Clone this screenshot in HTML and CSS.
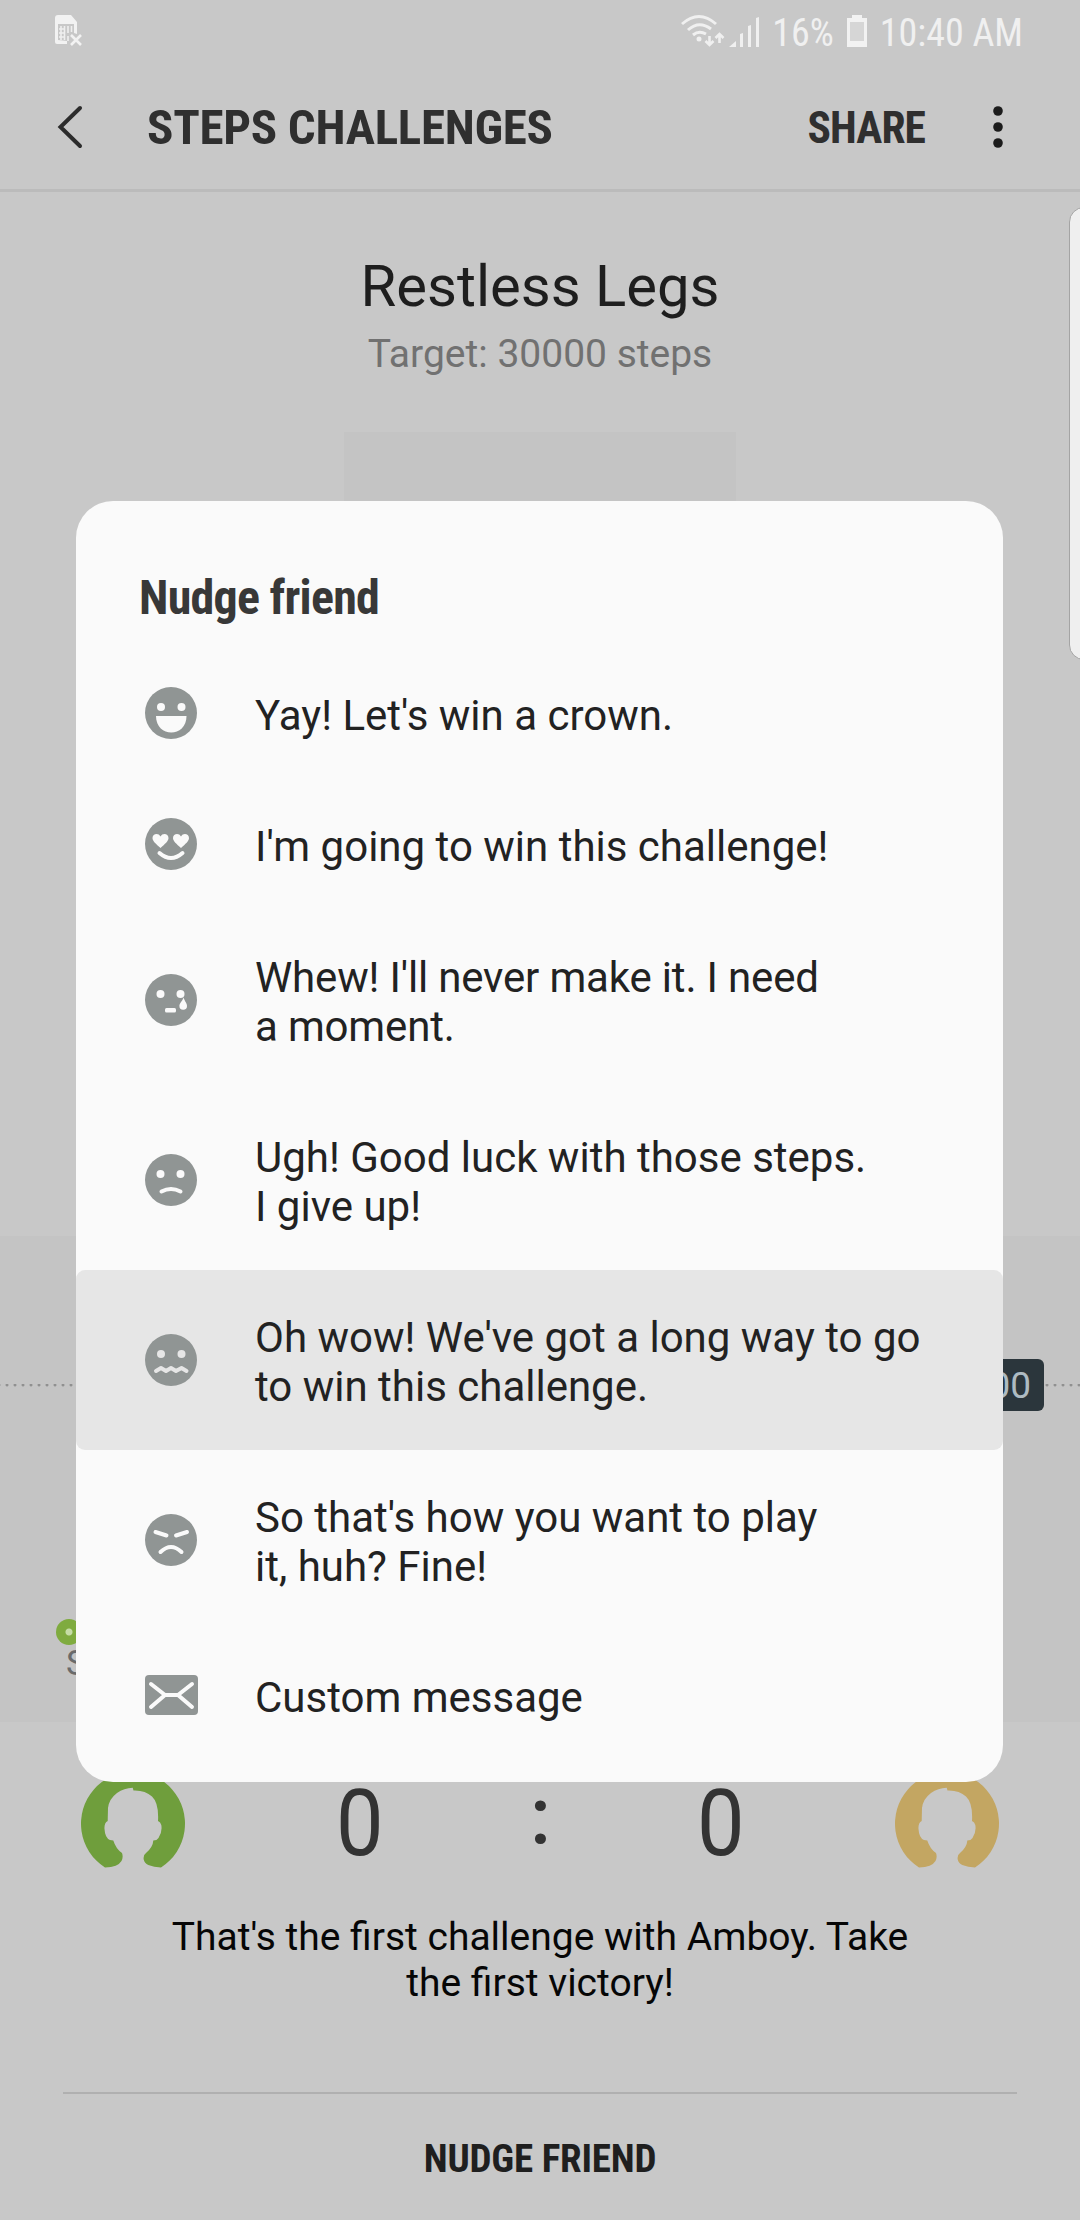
FILE: index.html
```html
<!DOCTYPE html>
<html lang="en">
<head>
<meta charset="utf-8">
<title>Steps challenges</title>
<link rel="stylesheet" href="styles.css">
</head>
<body>
<div class="screen">
  <header class="status">
    <svg class="sim" width="28" height="32" viewBox="0 0 28 32"><path fill="#f2f2f2" fill-rule="evenodd" d="M3 0H16L22 7V19L19 18V9H3V25L12 26V29H2Q0 29 0 27V3Q0 0 3 0Z"/><path fill="none" stroke="#efefef" stroke-width="1.6" d="M6 11v14M9.500 11v14M13 11v7M13 21v5M16.500 11v6M4 14h5M4 18h5M4 22h5"/><path stroke="#f2f2f2" stroke-width="2.600" d="M16 20L26 30M26 20L16 30"/></svg>
    <div class="status-right">
      <svg width="80" height="34" viewBox="0 0 80 34" fill="none" stroke="#f0f0f0"><path stroke-width="3" d="M1 10Q18-5 35 10M7 16Q18 6 30 15M12 21Q18 16 25 20"/><circle cx="18" cy="25" r="2.500" fill="#f0f0f0" stroke="none"/><path stroke-width="2.600" d="M28.500 22v9M24.500 27l4 4 4-4M38.500 29v-9M34.500 24l4-4 4 4"/><path fill="#f0f0f0" stroke="none" d="M48 33l7-6v6zM59 20l3-1v14h-3zM67 12l3-1v22h-3zM75 4l3-1v30h-3z"/></svg>
      <span class="cond status-text pct">16%</span>
      <svg width="22" height="34" viewBox="0 0 22 34"><path fill="#f2f2f2" d="M6 1h10v4H6zM1 4h20v29H1z"/><path fill="#d6d6d6" d="M4 8h14v19H4z"/></svg>
      <span class="cond status-text clock">10:40 AM</span>
    </div>
  </header>
  <nav class="bar">
    <svg class="back" width="28" height="46" viewBox="0 0 28 46"><path d="M23 4L3.500 23L23 42" fill="none" stroke="#2c2c2c" stroke-width="4" stroke-linecap="round"/></svg>
    <h1 class="cond bar-title">STEPS CHALLENGES</h1>
    <span class="cond share">SHARE</span>
    <svg class="more" width="12" height="44" viewBox="0 0 12 44" fill="#1c1c1c"><circle cx="6" cy="6" r="4.800"/><circle cx="6" cy="22" r="4.800"/><circle cx="6" cy="38" r="4.800"/></svg>
  </nav>
  <section class="head">
    <h2>Restless Legs</h2>
    <p>Target: 30000 steps</p>
    <div class="medal"></div>
  </section>
  <section class="chart">
    <div class="goal"><span class="goal-tag">00</span></div>
    <div class="start"><i class="dot"></i><span>S</span></div>
  </section>
  <section class="score">
    <svg width="106" height="106" viewBox="0 0 106 106"><use href="#ring" fill="#6f9e3c"/></svg>
    <span class="num">0</span>
    <span class="cond colon">:</span>
    <span class="num">0</span>
    <svg width="106" height="106" viewBox="0 0 106 106"><defs><path id="ring" d="M25 96.500A52 52 0 1 1 81 96.500Q74 96 68.300 94Q64.500 92 63.700 88.500Q63 84 66 82Q73 76 73.300 69.500Q77 69.500 78.500 67Q82.500 61 81.300 54Q80.500 51 78 50Q79 32 72 25.500Q65 19 53.500 19.500L52.700 16.700Q44 17 37 22Q29 28 28 37L27.700 50Q24 52 24.500 58Q25 67 30 69L33.300 69.500Q36 78 42 82Q43.500 86 41.500 90Q38 96 25 96.500Z"/></defs><use href="#ring" fill="#c3a662"/></svg>
  </section>
  <p class="note">That's the first challenge with Amboy. Take<br>the first victory!</p>
  <footer class="nudge"><span class="cond">NUDGE FRIEND</span></footer>

  <div class="edge"></div>

  <div class="dialog">
    <h3 class="cond">Nudge friend</h3>
    <ul>
      <li><svg class="ico" viewBox="0 0 52 52"><circle class="face" cx="26" cy="26" r="26"/><circle cx="16" cy="20" r="4"/><circle cx="36.500" cy="20" r="4"/><path d="M11 29H41.500C41.500 51 11 51 11 29Z"/></svg><span>Yay! Let's win a crown.</span></li>
      <li><svg class="ico" viewBox="0 0 52 52"><circle class="face" cx="26" cy="26" r="26"/><path id="heart" d="M15.500 30C11 26 7.500 23 7.500 20C7.500 15.500 13.500 14.500 15.500 18.500C17.500 14.500 23.500 15.500 23.500 20C23.500 23 20 26 15.500 30Z"/><use href="#heart" x="20.500"/><path class="line" d="M14.500 35Q26 45 37.500 35"/></svg><span>I'm going to win this challenge!</span></li>
      <li><svg class="ico" viewBox="0 0 52 52"><circle class="face" cx="26" cy="26" r="26"/><circle cx="15.500" cy="20" r="4"/><circle cx="35.500" cy="20" r="4"/><path d="M38.500 23.500C40 28 42 29 42 32A3.800 3.800 0 0 1 34.400 32C34.400 29 37.500 27 38.500 23.500Z"/><rect x="20" y="34" width="11" height="4.500" rx="1.500"/></svg><span class="tight">Whew! I'll never make it. I need<br>a moment.</span></li>
      <li><svg class="ico" viewBox="0 0 52 52"><circle class="face" cx="26" cy="26" r="26"/><circle cx="15.500" cy="20" r="4"/><circle cx="35.500" cy="20" r="4"/><path class="line" d="M16.500 37.500Q26 32.500 35.500 37.500"/></svg><span>Ugh! Good luck with those steps.<br>I give up!</span></li>
      <li class="active"><svg class="ico" viewBox="0 0 52 52"><circle class="face" cx="26" cy="26" r="26"/><circle cx="16" cy="20" r="4"/><circle cx="36.500" cy="20" r="4"/><path class="line" d="M11 37L16 34L21 37L26 34L31 37L36.500 34L41.500 37"/></svg><span>Oh wow! We've got a long way to go<br>to win this challenge.</span></li>
      <li><svg class="ico" viewBox="0 0 52 52"><circle class="face" cx="26" cy="26" r="26"/><path class="line" d="M10.500 18L21.500 21.500M42 18L31 21.500M15.500 38Q26 28 36.500 38"/></svg><span>So that's how you want to play<br>it, huh? Fine!</span></li>
      <li><svg class="ico" viewBox="0 0 52 52"><rect class="face" x="0" y="6" width="53" height="40" rx="4"/><path class="line" d="M6 15L20 26L6 38M47 15L33 26L47 38M20 26H33"/></svg><span>Custom message</span></li>
    </ul>
  </div>
</div>
</body>
</html>
```
FILE: styles.css
```css
* { box-sizing: border-box; margin: 0; padding: 0; }
body { width: 1080px; height: 2220px; overflow: hidden; font-family: Roboto, "Liberation Sans", sans-serif; }
svg { display: block; overflow: visible; flex: none; }
.screen { position: relative; width: 1080px; height: 2220px; background: #c8c8c8; overflow: hidden; display: flex; flex-direction: column; }
.cond { font-family: "Roboto Condensed", Roboto, sans-serif; font-stretch: 75%; white-space: nowrap; }

.status { height: 64px; display: flex; align-items: flex-start; justify-content: space-between; padding: 15px 57px 0 55px; }
.status-right { display: flex; align-items: flex-start; margin-top: -1px; }
.status-text { font-size: 38px; line-height: 38px; color: #f0f0f0; }
.pct { margin: 0 12px 0 11px; }
.clock { margin-left: 12px; }

.bar { height: 128px; display: flex; align-items: center; padding-left: 57px; border-bottom: 3px solid #bbb; }
.bar-title { margin-left: 62px; margin-top: 2px; font-size: 49px; font-weight: 700; letter-spacing: -0.3px; color: #2f2f2f; }
.share { margin-left: auto; margin-top: 3px; font-size: 43.5px; font-weight: 700; letter-spacing: -0.9px; color: #2f2f2f; }
.more { margin: 0 76px 0 67px; }

.head { height: 1044px; text-align: center; display: flex; flex-direction: column; align-items: center; padding-top: 57px; }
.head h2 { font-size: 58px; font-weight: 400; line-height: 74px; color: #1e1e1e; }
.head p { margin-top: 2px; font-size: 39px; line-height: 58px; color: #717171; }
.medal { margin-top: 49px; width: 392px; height: 392px; background: #c4c4c4; }

.chart { height: 486px; background: #c4c4c4; padding-top: 123px; }
.goal { height: 52px; display: flex; justify-content: flex-end; padding-right: 36px; background: radial-gradient(circle at 4px 1px, #909090 1.2px, transparent 1.8px) 3px 25px / 8px 3px repeat-x; }
.goal-tag { width: 131px; border-radius: 6px; background: #2b363c; color: #aebbc2; font-size: 37px; line-height: 53px; text-align: right; padding-right: 13px; }
.start { margin: 208px 0 0 56px; font-size: 35px; line-height: 38px; color: #6a6a6a; display: flex; flex-direction: column; }
.start span { margin-left: 10px; }
.dot { width: 26px; height: 26px; border-radius: 50%; background: radial-gradient(circle, #c6dda6 3px, #7fab3f 4px); }

.score { height: 168px; display: grid; grid-template-columns: 106px 347px 14px 347px 106px; align-items: center; justify-items: center; padding: 35px 80px 0; }
.num { font-size: 92px; line-height: 108px; color: #333; transform: scaleX(0.92); }
.colon { font-size: 80px; line-height: 94px; font-weight: 500; color: #333; margin-top: -14px; }
.note { height: 202px; padding-top: 24px; text-align: center; font-size: 39px; line-height: 46px; color: #060606; }
.nudge { margin: 0 63px; border-top: 2px solid #b0b0b0; flex: 1; text-align: center; font-size: 39px; font-weight: 700; letter-spacing: -0.2px; color: #1f1f1f; padding-top: 42px; }

.edge { position: absolute; left: 1069px; top: 207px; width: 30px; height: 453px; border: 1px solid #a4a4a4; border-radius: 15px; background: #efefef; }

.dialog { position: absolute; left: 76px; top: 501px; width: 927px; height: 1281px; border-radius: 37px; background: #fafafa; overflow: hidden; }
.dialog h3 { height: 147px; padding: 69px 0 0 63px; font-size: 48px; line-height: 56px; letter-spacing: -0.75px; color: #383838; }
.dialog ul { list-style: none; }
.dialog li { display: flex; align-items: center; padding: 41px 0 41px 69px; font-size: 42px; line-height: 49px; color: #222; border-radius: 9px; }
.dialog li span { margin-left: 58px; padding-top: 2px; margin-bottom: -2px; white-space: nowrap; }
.dialog li .tight { letter-spacing: -0.17px; }
.dialog .active { background: #e6e6e6; }
.ico { width: 52px; height: 52px; margin: -3px 0 -2px; fill: #fafafa; }
.ico .face { fill: #909594; }
.ico .line { fill: none; stroke: #fafafa; stroke-width: 4; stroke-linecap: round; stroke-linejoin: round; }
.active .ico { fill: #e6e6e6; }
.active .line { stroke: #e6e6e6; }
```
